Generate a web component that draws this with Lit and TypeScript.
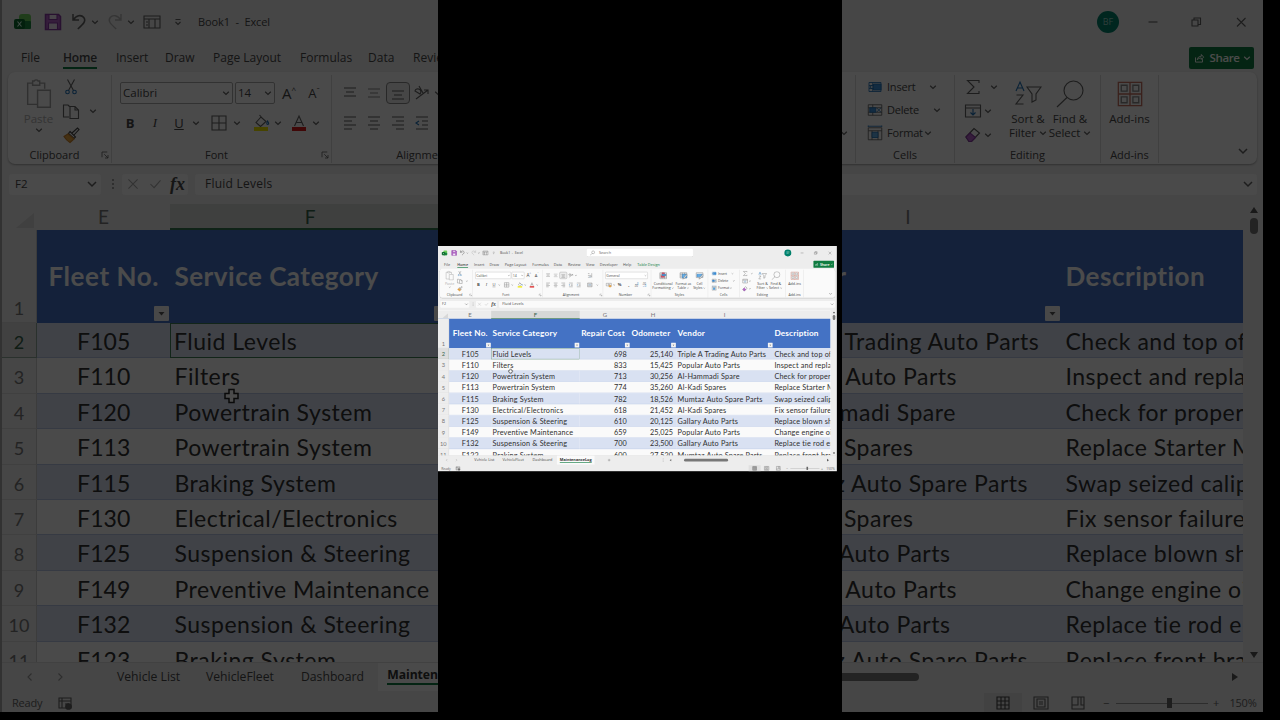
import { css, html, LitElement, svg, TemplateResult } from 'lit';
import { customElement } from 'lit/decorators.js';

type Strip = [center: number, width: number, content: TemplateResult][];

const icon = (body: TemplateResult, size = 24) => html`
  <svg class="icon" width="${size}" height="${size}" viewBox="0 0 24 24">${body}</svg>
`;

const chevron = html`<svg class="icon" width="8" height="8" viewBox="0 0 8 8">
  <path d="M1.2 2.8 4 5.4 6.8 2.8" stroke-width="1.2" />
</svg>`;

const launcher = icon(svg`<path d="M8 15V8h7M11 11l5 5M16 12v4h-4" />`);

const icons = {
  excel: icon(svg`
    <rect x="9" y="4" width="12" height="15" rx="3" fill="#6fcf5c" stroke="none" />
    <rect x="9" y="11" width="12" height="8" rx="1" fill="#1c8a43" stroke="none" />
    <rect x="4" y="9" width="11" height="10" rx="2" fill="#0b6a2c" stroke="none" />
    <path d="m7.500 11.500 4 5m0-5-4 5" stroke="#dfe" stroke-width="1.100" />`),
  save: icon(svg`
    <path d="M4.500 4.500h13l2 2v13h-15z" fill="#b565c9" stroke="#8a3aa5" stroke-width="1.500" />
    <path d="M8 4.500h8v5H8zM7.500 19v-6h9v6" fill="#f3e6f6" stroke="#8a3aa5" />`),
  undo: icon(svg`<path d="M6 4v6h6M6.300 10c3-5 8-5.500 10.500-2.500 2.600 3.500 0 6-6 11.500" stroke-width="1.500" />`),
  redo: icon(svg`<path d="M18 4v6h-6M17.700 10c-3-5-8-5.500-10.500-2.500-2.600 3.500 0 6 6 11.500" stroke="#b5b5b5" stroke-width="1.400" />`),
  form: icon(svg`<path d="M4 6h16v12H4zM4 9h16M9 9v9M15 9v9M6 12h2M6 15h2" />`),
  more: icon(svg`<path d="M9.500 9.500h5M9.500 12l2.500 2.500 2.500-2.500" />`),
  search: icon(svg`<circle cx="13.500" cy="10" r="4.500" /><path d="m10 13.500-5 5" />`),
  minimize: icon(svg`<path d="M7.500 12h9" />`),
  restore: icon(svg`<path d="M8 10h6v6H8zM10 10V8h6.500v6.500H14" />`),
  close: icon(svg`<path d="m8 8 8.500 8.500M16.500 8 8 16.500" />`),
  share: icon(svg`<path d="M6 11v8h12v-5M9 15c.5-4 3-6 7-6V6l4 4.500-4 4V12c-3 0-5 .8-7 3z" stroke="#fff" stroke-width="1.600" />`, 14),
  paste: icon(svg`
    <path d="M11 20H4V5h3.500M12.500 5H16v4M7.500 6.500v-3h1.200a1.500 1.500 0 0 1 2.600 0h1.200v3zM11 10h9v12h-9z" stroke="#a3a3a3" stroke-width="1" />`, 34),
  cut: icon(svg`
    <path d="m8.500 4.500 6 11M15.500 4.500l-6 11" />
    <circle cx="8.500" cy="17" r="1.800" stroke="#2072b8" /><circle cx="15.500" cy="17" r="1.800" stroke="#2072b8" />`),
  copy: icon(svg`<path d="M10 18H4.500V6H9l1.500 1.500M11 7.500h5l3.500 3.500v8.500H11zM16 7.500V11h3.500" />`),
  painter: icon(svg`
    <path d="m13 10 5.500-5 1.500 1.500-5 5.500" stroke="#444" />
    <path d="m11 8.500 5.500 5.500-1.500 1.500-5.500-5z" fill="#fff" stroke="#444" />
    <path d="m9 11 6 5-4 3.500C8.500 18 6.500 16 5 13.500z" fill="#e8a33d" stroke="#c9812a" />`),
  grow: html`<span class="grow">A<sup>^</sup></span>`,
  shrink: html`<span class="shrink">A<sup>ˇ</sup></span>`,
  bold: html`<b>B</b>`,
  italic: html`<i class="serif">I</i>`,
  underline: html`<u>U</u>`,
  borders: icon(svg`<path d="M5 5h14v14H5zM12 5v14M5 12h14" />`),
  fill: icon(svg`
    <path d="M7 11.500 12 6l5 4.500-5.500 5zM10.500 4l3.500 4" />
    <path d="M18.500 10c1.500 2 1.500 3.500.2 3.500s-1-1.500-.2-3.500z" stroke="#2072b8" />
    <path d="M5 18h14" stroke="#f2e800" stroke-width="4" />`),
  fontColor: icon(svg`
    <path d="m7.500 15 4.500-10 4.500 10M9 11.500h6" />
    <path d="M5 18h14" stroke="#d81b1b" stroke-width="4" />`),
  top: icon(svg`<path d="M6 7h12M8 11h8M6 15h12" />`),
  middle: icon(svg`<path d="M6 8h12M8 12h8M6 16h12" stroke="#888" />`),
  bottom: html`<span class="pressed">${icon(svg`<path d="M6 10h12M8 14h8M6 18h12" />`)}</span>`,
  orient: icon(svg`<path d="m6 18 12-9M14 9h4v4M5 10a3 3 0 1 1 5 3zM9 5l4 7" />`),
  left: icon(svg`<path d="M6 6h12M6 10h8M6 14h12M6 18h8" />`),
  center: icon(svg`<path d="M6 6h12M8 10h8M6 14h12M8 18h8" />`),
  right: icon(svg`<path d="M6 6h12M10 10h8M6 14h12M10 18h8" />`),
  outdent: icon(svg`<path d="M6 6h12M12 10h6M12 14h6M6 18h12" /><path d="M9 10 6 12l3 2" stroke="#2072b8" />`),
  indent: icon(svg`<path d="M6 6h12M12 10h6M12 14h6M6 18h12" /><path d="m6 10 3 2-3 2" stroke="#2072b8" />`),
  wrap: icon(svg`<path d="M6 6h5M6 18h5M18 5v14M6 12h8a2 2 0 0 1 0 5h-3" /><path d="m13 15-2 2 2 2" stroke="#2072b8" />`),
  merge: icon(svg`<path d="M5 6h14v12H5zM5 9h14M5 15h14" /><path d="M8 12h8" stroke="#2072b8" />`),
  money: icon(svg`
    <path d="M4 7h16v8H4z" /><circle cx="12" cy="11" r="2" />
    <ellipse cx="16" cy="16" rx="4" ry="3" fill="#f0b45c" stroke="#c9812a" />`),
  incDecimal: html`<span class="decimal"><em>←0</em>.00</span>`,
  decDecimal: html`<span class="decimal">.00<em>→0</em></span>`,
  conditional: icon(svg`
    <path d="M3 4h18v16H3z" fill="#fff" /><path d="M3 8h18M3 12h18M3 16h18M9 4v16M15 4v16" />
    <path d="M9 4h6v4H9zM6 12h9v4H6z" fill="#e05a68" stroke="#c3364a" />
    <path d="M9 8h10v4H9z" fill="#4b97d8" stroke="#2072b8" />`, 30),
  formatTable: icon(svg`
    <path d="M3 4h18v14H3zM3 8h18M3 13h18M9 4v14M15 4v14" />
    <path d="M9 8h12v10H9z" fill="#63aee8" stroke="#2072b8" />
    <path d="m20 8-7 9-3 4 5-2 7-9z" fill="#fff" />`, 30),
  cellStyles: icon(svg`
    <path d="M3 4h18v13H3z" /><path d="M5 8h14v7H5z" fill="#63aee8" stroke="#2072b8" />
    <path d="m20 8-7 9-3 4 5-2 7-9z" fill="#fff" />`, 30),
  insertCells: icon(svg`
    <path d="M4 6h16v12H4zM4 10h16M4 14h16M9 6v12" stroke="#2072b8" />
    <path d="M10 8h10v8H10z" fill="#3f92dc" stroke="#2072b8" /><path d="m9 9-4 3 4 3" stroke="#2072b8" />`, 18),
  deleteCells: icon(svg`
    <path d="M3 5h18v14H3zM3 9h18M3 15h18M9 5v14" />
    <path d="M5 9h8v6H5z" fill="#3f92dc" stroke="#2072b8" /><path d="m14 9 6 6m0-6-6 6" stroke="#2072b8" />`, 18),
  formatCells: icon(svg`
    <path d="M3 5h18v16H3zM3 9h18M8 9v12M16 9v12" />
    <path d="M8 11h8v7H8z" fill="#63aee8" stroke="#2072b8" /><path d="M3 2v2M21 2v2M3 3h18" stroke="#2072b8" />`, 18),
  sum: icon(svg`<path d="M18 8V5.500H6.500L13 12l-6.500 6.500H18V16" />`),
  fillDown: icon(svg`<path d="M4.500 6h15v12h-15zM4.500 9h15" /><path d="M12 10v6M9.500 13.500 12 16l2.500-2.500" stroke="#2072b8" />`),
  eraser: icon(svg`
    <path d="m5 14 8-8.500 5.500 4.500-8 8.500H8z" fill="#fff" stroke="#555" />
    <path d="m5 14 4-4 5.500 4.500-4 4H8z" fill="#b565c9" stroke="#8a3aa5" />`),
  sortFilter: svg`<svg class="icon" width="28" height="28" viewBox="0 0 28 28">
    <path d="m2 11 4-9 4 9M3.500 8h5" stroke="#2072b8" />
    <path d="M2.500 15H9l-7 9h7.500M13 7h14l-5 7v6l-4 2v-8z" />
  </svg>`,
  find: svg`<svg class="icon" width="30" height="28" viewBox="0 0 30 28">
    <circle cx="18.500" cy="10.500" r="9.500" /><path d="M12 17.500 2 27" />
  </svg>`,
  addins: icon(svg`
    <path d="M2 2h20v20H2zM12 2v20M2 12h20" stroke="#c4705f" />
    <path d="M4.500 4.500h5v5h-5zM14.500 4.500h5v5h-5zM4.500 14.500h5v5h-5zM14.500 14.500h5v5h-5z" stroke="#888" />`, 30),
  down: icon(svg`<path d="m8 10 4 4 4-4" stroke-width="1.500" />`),
  dots: icon(svg`<path d="M12 7v2M12 11v2M12 15v2" />`),
  cancel: icon(svg`<path d="m7 7 10 10M17 7 7 17" stroke="#aaa" />`),
  accept: icon(svg`<path d="m7 12 4 4 7-8" stroke="#aaa" />`),
  prev: icon(svg`<path d="m13.500 8.500-3.500 3.500 3.500 3.500" stroke="#999" />`),
  next: icon(svg`<path d="m10.500 8.500 3.500 3.500-3.500 3.500" stroke="#999" />`),
  plus: icon(svg`<path d="M8 12h8M12 8v8" />`),
  scrollLeft: icon(svg`<path d="m14.500 8.500-5 3.500 5 3.500z" fill="#666" stroke="none" />`),
  scrollRight: icon(svg`<path d="m9 8 6 4-6 4z" fill="#555" stroke="none" />`),
  macro: icon(svg`<path d="M6 7h12v10H6zM6 10h12M9 7v10M12 13h4" /><circle cx="15.500" cy="15.500" r="2.800" fill="#666" />`),
  viewNormal: icon(svg`<path d="M6 6h12v12H6zM6 10h12M6 14h12M10 6v12M14 6v12" stroke="#444" />`),
  viewPage: icon(svg`<path d="M5 6h14v12H5zM8 8h8v8H8zM10 11h4M10 13h4" />`),
  viewBreak: icon(svg`<path d="M6 6h12v12H6zM6 14h6V6M15 6v8h3" />`),
};

const TABS: [string, number][] = [
  ['File', 42],
  ['Home', 53],
  ['Insert', 49],
  ['Draw', 48],
  ['Page Layout', 87],
  ['Formulas', 68],
  ['Data', 45],
  ['Review', 57],
  ['View', 43],
  ['Developer', 74],
  ['Help', 45],
  ['Table Design', 90],
];

const COLUMNS: [letter: string, title: string][] = [
  ['E', 'Fleet No.'],
  ['F', 'Service Category'],
  ['G', 'Repair Cost'],
  ['H', 'Odometer'],
  ['I', 'Vendor'],
  ['', 'Description'],
];

const ROWS = [
  ['F105', 'Fluid Levels', '698', '25,140', 'Triple A Trading Auto Parts', 'Check and top off'],
  ['F110', 'Filters', '833', '15,425', 'Popular Auto Parts', 'Inspect and replace'],
  ['F120', 'Powertrain System', '713', '30,256', 'Al-Hammadi Spare', 'Check for proper'],
  ['F113', 'Powertrain System', '774', '35,260', 'Al-Kadi Spares', 'Replace Starter Motor'],
  ['F115', 'Braking System', '782', '18,526', 'Mumtaz Auto Spare Parts', 'Swap seized caliper'],
  ['F130', 'Electrical/Electronics', '618', '21,452', 'Al-Kadi Spares', 'Fix sensor failure'],
  ['F125', 'Suspension & Steering', '610', '20,125', 'Gallary Auto Parts', 'Replace blown shocks'],
  ['F149', 'Preventive Maintenance', '659', '25,025', 'Popular Auto Parts', 'Change engine oil'],
  ['F132', 'Suspension & Steering', '700', '23,500', 'Gallary Auto Parts', 'Replace tie rod ends'],
  ['F123', 'Braking System', '600', '27,520', 'Mumtaz Auto Spare Parts', 'Replace front brakes'],
];

@customElement('excel-window')
export class ExcelWindow extends LitElement {
  static styles = css`
    :host {
      display: flex;
      flex-direction: column;
      box-sizing: border-box;
      width: 1263px;
      height: 712px;
      overflow: hidden;
      border-left: 2px solid #a9a9a9;
      background: #ededed;
      color: #484848;
      font: 12px/16px 'Open Sans', sans-serif;
      white-space: nowrap;
    }

    .icon {
      display: block;
      flex: none;
      fill: none;
      stroke: #626262;
      stroke-width: 1.1;
    }

    .strip {
      display: flex;
      align-items: center;
      height: 24px;
    }

    .item {
      display: flex;
      flex: none;
      justify-content: center;
      align-items: center;
    }

    .title {
      height: 43px;
      flex: none;
      display: flex;
      align-items: center;
    }

    .title .strip {
      width: 196px;
    }

    .title .strip.controls {
      width: 200px;
      margin-left: 254px;
    }

    .book {
      width: 274px;
      letter-spacing: -0.1px;
      font-size: 11px;
    }

    .search {
      display: flex;
      align-items: center;
      box-sizing: border-box;
      gap: 8px;
      width: 337px;
      height: 27px;
      padding-left: 6px;
      background: #fff;
      border: 1px solid #ddd;
      border-bottom-color: #aaa;
      border-radius: 4px;
      color: #666;
    }

    .avatar {
      width: 22px;
      height: 22px;
      border-radius: 50%;
      background: #00806b;
      color: #9ccfc5;
      font-size: 9px;
      line-height: 22px;
      text-align: center;
    }

    .tabs {
      display: flex;
      flex: none;
      height: 29px;
      padding: 4px 9px 0 19px;
      box-sizing: border-box;
      font-size: 12px;
    }

    .tab {
      box-sizing: border-box;
    }

    .tab span {
      display: inline-block;
      height: 20px;
      line-height: 22px;
    }

    .tab.active span {
      border-bottom: 2px solid #107c41;
      font-weight: 600;
      letter-spacing: -0.2px;
    }

    .tab.design {
      color: #107c41;
    }

    .share {
      display: flex;
      align-items: center;
      justify-content: center;
      gap: 4px;
      box-sizing: border-box;
      width: 65px;
      height: 22px;
      margin-left: auto;
      border-radius: 2px;
      background: #107c41;
      color: #fff;
      font-size: 11.5px;
      font-weight: 600;
      letter-spacing: -0.4px;
    }

    .share .icon {
      stroke: #fff;
    }

    .ribbon {
      display: flex;
      flex: none;
      box-sizing: border-box;
      height: 92px;
      margin: 0 6px 0 6px;
      padding: 3px 0 1px;
      background: #fafafa;
      border-radius: 7px;
      box-shadow: 0 1px 2px rgba(0, 0, 0, 0.3);
    }

    .group {
      display: flex;
      flex-direction: column;
      flex: none;
      box-sizing: border-box;
      border-right: 1px solid #dadada;
    }

    .group .label {
      display: flex;
      justify-content: center;
      align-items: center;
      height: 16px;
      font-size: 11px;
      margin-top: auto;
    }

    .label .name {
      flex: 1;
      text-align: center;
    }

    .label .icon {
      width: 18px;
      height: 20px;
      margin: 0 -3px 0 -5px;
    }

    .body {
      display: flex;
      height: 70px;
    }

    .rows {
      display: flex;
      flex-direction: column;
      padding-top: 6px;
      gap: 6px;
    }

    .rows.three {
      padding-top: 0;
      gap: 0;
    }

    .clipboard { width: 104px; }
    .font { width: 220px; }
    .alignment { width: 192px; }
    .number { width: 152px; }
    .styles { width: 180px; }
    .cells { width: 99px; }
    .editing { width: 146px; }
    .addins { width: 58px; }

    .big {
      display: flex;
      flex-direction: column;
      align-items: center;
      padding-top: 5px;
      line-height: 14px;
      font-size: 11.5px;
      text-align: center;
    }

    .big > .icon {
      margin-bottom: 4px;
      height: 28px;
    }

    .big .icon[width='8'] {
      display: inline-block;
      height: 8px;
    }

    .paste {
      width: 50px;
      padding: 0 0 0 11px;
      box-sizing: border-box;
      color: #b0b0b0;
    }

    .clipboard .paste > .icon {
      height: 34px;
      margin: 1px 0 2px;
    }

    .clipboard .paste > .icon[width='8'] {
      height: 8px;
      margin: 0;
    }

    .conditional { width: 76px; font-size: 11.3px; }
    .wide { width: 51px; font-size: 11px; letter-spacing: -0.2px; }
    .sort { width: 44px; }
    .sort + .sort { margin-left: -2px; }
    .addins .big { width: 57px; }

    .combo {
      display: flex;
      justify-content: space-between;
      align-items: center;
      box-sizing: border-box;
      height: 22px;
      padding: 0 2px 0 2px;
      border: 1px solid #aaa;
      border-radius: 2px;
      background: #fff;
      font-size: 11.5px;
    }

    .combo.face { width: 113px; }
    .combo.size { width: 40px; }
    .combo.format { width: 134px; }

    .pressed {
      border: 1px solid #888;
      border-radius: 4px;
      background: #ececec;
      margin: -1px;
    }

    .pressed .icon {
      margin: -2px -1px;
    }

    .grow { font-size: 15px; }
    .shrink { font-size: 13px; }
    sup { font-size: 8px; line-height: 0; }
    .item b, .item i, .item u { font-size: 13px; }
    .serif { font-family: 'Liberation Serif', serif; }

    .decimal {
      width: 18px;
      font-size: 8px;
      line-height: 8px;
      white-space: normal;
      word-break: break-all;
    }

    .decimal em {
      display: block;
      color: #2072b8;
      font-style: normal;
    }

    .cmd {
      display: flex;
      align-items: center;
      height: 24px;
      padding-left: 10px;
      font-size: 11px;
      letter-spacing: -0.2px;
    }

    .cmd .text {
      padding-left: 3px;
    }

    .cmd .icon[width='8'] {
      margin-left: auto;
    }

    .cmd.insert { width: 71px; }
    .cmd.delete { width: 75px; }
    .cmd.format { width: 66px; }

    .expand {
      margin-left: auto;
      align-self: flex-end;
      padding: 0 2px 0 0;
    }

    .formula {
      display: flex;
      align-items: center;
      flex: none;
      height: 40px;
      padding: 0 6px 0 7px;
    }

    .formula > div {
      display: flex;
      align-items: center;
      box-sizing: border-box;
      height: 21px;
      background: #fafafa;
      border-radius: 3px;
    }

    .formula .namebox {
      justify-content: space-between;
      width: 92px;
      padding-left: 6px;
      font-size: 11.5px;
    }

    .namebox .icon,
    .value .icon {
      margin-right: -3px;
    }

    .formula .fx {
      width: 66px;
      margin: 0 7px 0 -3px;
    }

    .fx .icon {
      width: 22px;
      height: 22px;
    }

    .fx em {
      padding-left: 4px;
      font: italic 600 18px/20px 'Liberation Serif', serif;
    }

    .formula .value {
      flex: 1;
      justify-content: space-between;
      padding-left: 10px;
      letter-spacing: 0.25px;
    }

    .sheet {
      display: flex;
      flex: none;
      height: 458px;
    }

    .grid {
      width: 1241px;
      overflow: hidden;
      font-family: Lato, sans-serif;
      font-size: 23px;
      font-variant-ligatures: none;
      color: #303030;
      background: #fafafa;
    }

    .row {
      display: grid;
      grid-template-columns: 35px 133px 280px 159px 146px 306px 182px;
      height: 35.4px;
    }

    .row > div {
      box-sizing: border-box;
      padding: 0 4px 0 4.5px;
      line-height: 36.5px;
      letter-spacing: 0.5px;
      overflow: hidden;
    }

    .row > .head {
      padding: 0;
      background: #ededed;
      border-right: 1px solid #ccc;
      border-bottom: 1px solid #d8d8d8;
      color: #777;
      font-size: 18px;
      letter-spacing: 0;
      line-height: 38px;
      text-align: center;
    }

    .row > .mid { text-align: center; letter-spacing: 0.1px; }
    .row > .num { text-align: right; padding-right: 10.5px; letter-spacing: 0; }

    .band > .cell { background: #d9e1f2; }
    .data > .cell { border-bottom: 1px solid #b7c6e4; }

    .row > .head.current {
      background: #ddd;
      color: #35624a;
      border-color: #8fa89a;
    }

    .band > .selected {
      border: 1.5px solid #3f7d55;
      padding-left: 3px;
      line-height: 34.5px;
    }

    .letters {
      height: 25.5px;
      background: #ededed;
      color: #777;
      font-size: 19px;
    }

    .letters > div {
      line-height: 26px;
      text-align: center;
    }

    .letters > .on {
      background: #d6d8d7;
      border-bottom: 2px solid #35764f;
      color: #35624a;
    }

    .letters > .corner {
      display: flex;
      align-items: flex-end;
      justify-content: flex-end;
      padding: 0 3px 2px 0;
    }

    .titles {
      height: 93.5px;
      color: #fff;
      background: #4472c4;
      font-weight: bold;
      font-size: 26px;
    }

    .titles > .head {
      font-weight: normal;
      padding-top: 61px;
      line-height: 34px;
    }

    .titles > .cell {
      display: flex;
      flex-direction: column;
      align-items: flex-end;
      padding-right: 1px;
      padding-top: 26px;
      line-height: 40px;
    }

    .titles > .mid {
      letter-spacing: 0.6px;
    }

    .titles .name {
      align-self: flex-start;
      height: 50px;
    }

    .titles .mid .name {
      align-self: center;
      margin-left: -3px;
    }

    .filter {
      width: 15px;
      height: 15px;
      flex: none;
      background: #f4f4f4;
      border-radius: 1px;
    }

    .vscroll {
      display: flex;
      flex-direction: column;
      align-items: center;
      flex: 1;
      padding: 3px 0 0 2px;
    }

    .vscroll .thumb {
      width: 8px;
      height: 16px;
      margin: 4px 0 auto;
      border-radius: 4px;
      background: #777;
    }

    .vscroll .icon:last-child {
      margin-bottom: 3px;
    }

    .sheets {
      display: flex;
      align-items: center;
      flex: none;
      height: 29px;
      box-sizing: border-box;
      border-top: 1px solid #ddd;
      font-size: 12.2px;
    }

    .sheets .nav { width: 115px; }
    .sheets .vehicles { width: 89px; }
    .sheets .fleet { width: 95px; }
    .sheets .dash { width: 77px; }

    .sheets .current {
      display: flex;
      justify-content: center;
      box-sizing: border-box;
      width: 119px;
      height: 28px;
      background: #fafafa;
      font-weight: 700;
      color: #333;
      letter-spacing: -0.05px;
    }

    .sheets .current span {
      height: 20px;
      line-height: 23px;
      border-bottom: 2px solid #107c41;
    }

    .sheets .hbar {
      width: 139px;
      height: 8px;
      border-radius: 4px;
      background: #777;
    }

    .status {
      display: flex;
      align-items: center;
      flex: 1;
      padding: 0 7px 2px 10px;
      font-size: 11px;
      letter-spacing: -0.2px;
      color: #666;
    }

    .status .ready { width: 41px; }
    .status .views { margin-left: auto; }

    .normal {
      display: flex;
      justify-content: center;
      width: 38px;
      height: 20px;
      align-items: center;
      background: #e0e0e0;
    }

    .zoom {
      display: flex;
      align-items: center;
      justify-content: center;
      width: 92px;
      height: 12px;
      background: linear-gradient(#999, #999) center / 100% 1px no-repeat;
    }

    .zoom::before {
      content: '';
      width: 5px;
      height: 10px;
      margin-left: 14px;
      background: #666;
    }

    .pointer {
      position: absolute;
      left: 219.5px;
      top: 386px;
    }
  `;

  render() {
    return html`
      ${this.renderTitle()} ${this.renderTabs()} ${this.renderRibbon()}
      <div class="formula">
        <div class="namebox">F2 ${icons.down}</div>
        ${icons.dots}
        <div class="fx">${icons.cancel}${icons.accept}<em>fx</em></div>
        <div class="value">Fluid Levels ${icons.down}</div>
      </div>
      ${this.renderSheet()} ${this.renderFooter()}
      <svg class="icon pointer" width="20" height="20" viewBox="0 0 20 20">
        <path d="M7 3.500h5v4h4v5h-4v4H7v-4H3v-5h4z" fill="#fff" stroke="#222" stroke-width="1.500" />
      </svg>
    `;
  }

  // Lays items out left to right so that each one is centred on its own mark.
  private strip(origin: number, items: Strip, name = '') {
    let edge = origin;
    return html`<div class="strip ${name}">
      ${items.map(([center, width, content]) => {
        const gap = center - width / 2 - edge;
        edge = center + width / 2;
        return html`<span class="item" style="width:${width}px;margin-left:${gap}px">${content}</span>`;
      })}
    </div>`;
  }

  private renderTitle() {
    return html`<div class="title">
      ${this.strip(2, [
        [22, 24, icons.excel],
        [53, 24, icons.save],
        [79, 24, icons.undo],
        [95, 8, chevron],
        [115, 24, icons.redo],
        [131, 8, chevron],
        [152, 24, icons.form],
        [178, 24, icons.more],
      ])}
      <span class="book">Book1 &nbsp;-&nbsp; Excel</span>
      <div class="search">${icons.search}Search</div>
      ${this.strip(1063, [
        [1108, 22, html`<span class="avatar">BF</span>`],
        [1153, 24, icons.minimize],
        [1196, 24, icons.restore],
        [1241, 24, icons.close],
      ], 'controls')}
    </div>`;
  }

  private renderTabs() {
    return html`<div class="tabs">
      ${TABS.map(([name, width]) => {
        const kind = name === 'Home' ? 'active' : name === 'Table Design' ? 'design' : '';
        return html`<div class="tab ${kind}" style="width:${width}px"><span>${name}</span></div>`;
      })}
      <div class="share">${icons.share}Share${chevron}</div>
    </div>`;
  }

  private group(name: string, label: string, body: TemplateResult, hasLauncher = false) {
    return html`<div class="group ${name}">
      <div class="body">${body}</div>
      <div class="label"><span class="name">${label}</span>${hasLauncher ? launcher : ''}</div>
    </div>`;
  }

  private renderRibbon() {
    return html`<div class="ribbon">
      ${this.group('clipboard', 'Clipboard', html`
        <div class="big paste">${icons.paste}<span>Paste</span>${chevron}</div>
        <div class="rows three">
          ${this.strip(58, [[71, 22, icons.cut]])}
          ${this.strip(58, [[71, 22, icons.copy], [93, 8, chevron]])}
          ${this.strip(58, [[71, 22, icons.painter]])}
        </div>`, true)}
      ${this.group('font', 'Font', html`<div class="rows">
        ${this.strip(112, [
          [176.5, 113, html`<div class="combo face">Calibri${chevron}</div>`],
          [255, 40, html`<div class="combo size">14${chevron}</div>`],
          [289, 24, icons.grow],
          [314, 22, icons.shrink],
        ])}
        ${this.strip(112, [
          [130, 20, icons.bold],
          [155, 20, icons.italic],
          [179, 20, icons.underline],
          [196, 8, chevron],
          [219, 24, icons.borders],
          [237, 8, chevron],
          [261, 24, icons.fill],
          [278, 8, chevron],
          [299, 24, icons.fontColor],
          [316, 8, chevron],
        ])}
      </div>`, true)}
      ${this.group('alignment', 'Alignment', html`<div class="rows">
        ${this.strip(332, [
          [350, 24, icons.top],
          [374, 24, icons.middle],
          [398, 24, icons.bottom],
          [422, 24, icons.orient],
          [438, 8, chevron],
          [482, 24, icons.wrap],
        ])}
        ${this.strip(332, [
          [350, 24, icons.left],
          [374, 24, icons.center],
          [398, 24, icons.right],
          [422, 24, icons.outdent],
          [447, 24, icons.indent],
          [482, 24, icons.merge],
          [506, 8, chevron],
        ])}
      </div>`, true)}
      ${this.group('number', 'Number', html`<div class="rows">
        ${this.strip(524, [[598, 134, html`<div class="combo format">General${chevron}</div>`]])}
        ${this.strip(524, [
          [542, 24, icons.money],
          [559, 8, chevron],
          [576, 20, html`<b>%</b>`],
          [605, 20, html`<b>,</b>`],
          [632, 20, icons.incDecimal],
          [657, 20, icons.decDecimal],
        ])}
      </div>`, true)}
      ${this.group('styles', 'Styles', html`
        <div class="big conditional">${icons.conditional}<span>Conditional<br />Formatting ${chevron}</span></div>
        <div class="big wide">${icons.formatTable}<span>Format as<br />Table ${chevron}</span></div>
        <div class="big wide">${icons.cellStyles}<span>Cell<br />Styles ${chevron}</span></div>
      `)}
      ${this.group('cells', 'Cells', html`<div class="rows three">
        <div class="cmd insert">${icons.insertCells}<span class="text">Insert</span>${chevron}</div>
        <div class="cmd delete">${icons.deleteCells}<span class="text">Delete</span>${chevron}</div>
        <div class="cmd format">${icons.formatCells}<span class="text">Format</span>${chevron}</div>
      </div>`)}
      ${this.group('editing', 'Editing', html`
        <div class="rows three">
          ${this.strip(955, [[973, 24, icons.sum], [994, 8, chevron]])}
          ${this.strip(955, [[973, 24, icons.fillDown], [988, 8, chevron]])}
          ${this.strip(955, [[973, 24, icons.eraser], [988, 8, chevron]])}
        </div>
        <div class="big sort" style="margin-left:8px">${icons.sortFilter}<span>Sort &amp;<br />Filter ${chevron}</span></div>
        <div class="big sort">${icons.find}<span>Find &amp;<br />Select ${chevron}</span></div>
      `)}
      ${this.group('addins', 'Add-ins', html`<div class="big">${icons.addins}<span>Add-ins</span></div>`)}
      <span class="expand">${icons.down}</span>
    </div>`;
  }

  private renderSheet() {
    return html`<div class="sheet">
      <div class="grid">
        <div class="row letters">
          <div class="corner">
            <svg width="18" height="15" viewBox="0 0 18 15"><path d="M18 0v15H0z" fill="#d8d8d8" /></svg>
          </div>
          ${COLUMNS.map(([letter]) => html`<div class="${letter === 'F' ? 'on' : ''}">${letter}</div>`)}
        </div>
        <div class="row titles">
          <div class="head">1</div>
          ${COLUMNS.map(([, title], i) => html`<div class="cell ${i === 0 ? 'mid' : ''}">
            <span class="name">${title}</span>
            ${i < 5
              ? html`<svg class="filter" viewBox="0 0 15 15"><path d="M4.500 6h6L7.500 9.500z" fill="#555" /></svg>`
              : ''}
          </div>`)}
        </div>
        ${ROWS.map((row, index) => html`<div class="row data ${index % 2 ? '' : 'band'}">
          <div class="head ${index === 0 ? 'current' : ''}">${index + 2}</div>
          ${row.map((text, i) => {
            const align = i === 0 ? 'mid' : i === 2 || i === 3 ? 'num' : '';
            const selected = index === 0 && i === 1 ? 'selected' : '';
            return html`<div class="cell ${align} ${selected}">${text}</div>`;
          })}
        </div>`)}
      </div>
      <div class="vscroll">
        <svg width="8" height="7" viewBox="0 0 8 7"><path d="M4 0l4 6H0z" fill="#555" /></svg>
        <div class="thumb"></div>
        <svg class="icon" width="8" height="7" viewBox="0 0 8 7"><path d="M0 0h8L4 6z" fill="#555" stroke="none" /></svg>
      </div>
    </div>`;
  }

  private renderFooter() {
    return html`
      <div class="sheets">
        ${this.strip(2, [[30, 24, icons.prev], [60, 24, icons.next]], 'nav')}
        <span class="vehicles">Vehicle List</span>
        <span class="fleet">VehicleFleet</span>
        <span class="dash">Dashboard</span>
        <div class="current"><span>MaintenanceLog</span></div>
        ${this.strip(497, [
          [543, 24, icons.plus],
          [714, 20, icons.dots],
          [737, 24, icons.scrollLeft],
          [849.5, 139, html`<div class="hbar"></div>`],
          [1235, 24, icons.scrollRight],
        ])}
      </div>
      <div class="status">
        <span class="ready">Ready</span>${icons.macro}
        ${this.strip(984, [
          [1003, 38, html`<span class="normal">${icons.viewNormal}</span>`],
          [1041, 24, icons.viewPage],
          [1078, 24, icons.viewBreak],
          [1106, 14, html`−`],
          [1162, 92, html`<div class="zoom"></div>`],
          [1216, 12, html`+`],
          [1243, 26, html`150%`],
        ], 'views')}
      </div>
    `;
  }
}

@customElement('app-root')
export class AppRoot extends LitElement {
  static styles = css`
    :host {
      display: block;
      position: relative;
      width: 1280px;
      height: 720px;
      overflow: hidden;
      background: #000;
    }

    .backdrop {
      position: relative;
      opacity: 0.295;
    }

    .video {
      position: absolute;
      top: 0;
      left: 438px;
      width: 404px;
      height: 720px;
      padding-top: 245.8px;
      box-sizing: border-box;
      overflow: hidden;
      background: #000;
    }

    .front {
      position: relative;
      transform: scale(0.3163);
      transform-origin: 2px 0;
      margin-left: -1.8px;
    }
  `;

  render() {
    return html`
      <excel-window class="backdrop"></excel-window>
      <div class="video">
        <excel-window class="front"></excel-window>
      </div>
    `;
  }
}
